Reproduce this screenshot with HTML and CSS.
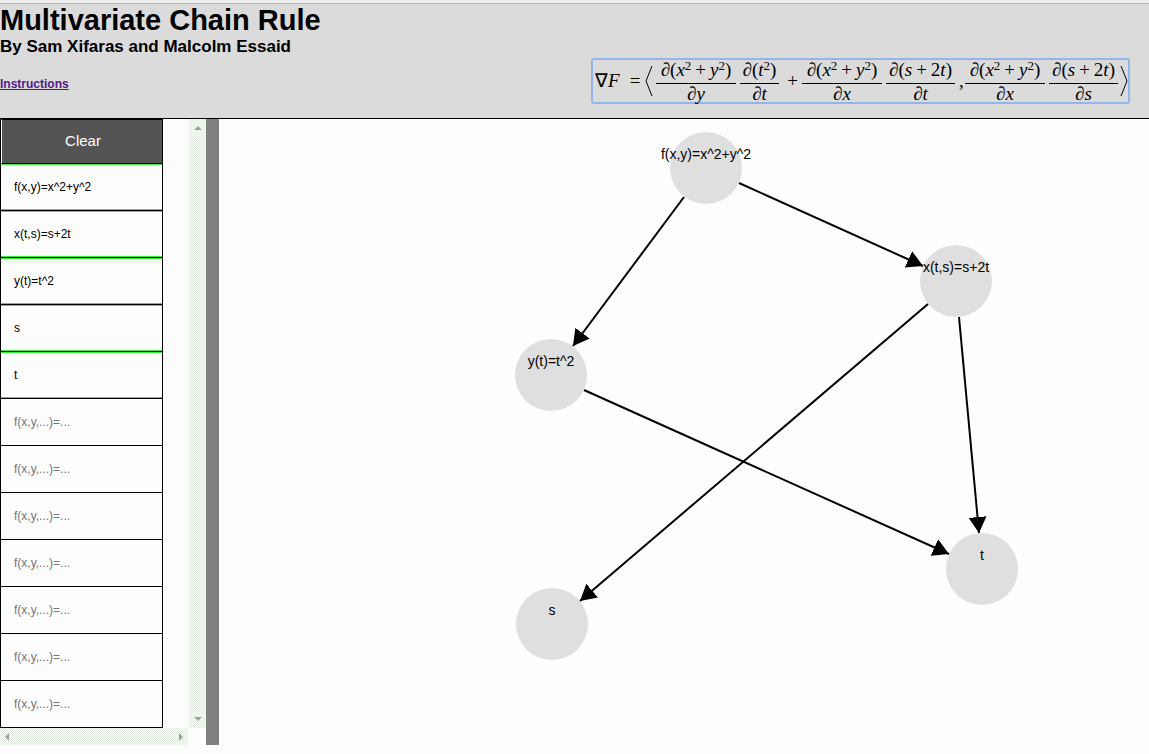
FILE: index.html
```html
<!DOCTYPE html>
<html lang="en">
<head>
<meta charset="utf-8">
<title>Multivariate Chain Rule</title>
<link rel="stylesheet" href="styles.css">
</head>
<body>
<header class="header">
  <div class="titles">
    <h1 class="title">Multivariate Chain Rule</h1>
    <h2 class="authors">By Sam Xifaras and Malcolm Essaid</h2>
    <a class="help" href="#instructions">Instructions</a>
  </div>
  <div class="formula" tabindex="0">
    <span class="gradient">∇<i>F</i></span>
    <span class="equals">=</span>
    <svg class="angle" viewBox="0 0 8 32" aria-hidden="true"><path d="M7 1 1 16l6 15"/></svg>
    <span class="frac wide"><span class="num"><i>∂</i>(<i>x</i><sup>2</sup><b class="op">+</b><i>y</i><sup>2</sup>)</span><span class="den"><i>∂y</i></span></span>
    <span class="frac small"><span class="num"><i>∂</i>(<i>t</i><sup>2</sup>)</span><span class="den"><i>∂t</i></span></span>
    <span class="plus">+</span>
    <span class="frac wide"><span class="num"><i>∂</i>(<i>x</i><sup>2</sup><b class="op">+</b><i>y</i><sup>2</sup>)</span><span class="den"><i>∂x</i></span></span>
    <span class="frac medium"><span class="num"><i>∂</i>(<i>s</i><b class="op">+</b>2<i>t</i>)</span><span class="den"><i>∂t</i></span></span>
    <span class="comma">,</span>
    <span class="frac wide"><span class="num"><i>∂</i>(<i>x</i><sup>2</sup><b class="op">+</b><i>y</i><sup>2</sup>)</span><span class="den"><i>∂x</i></span></span>
    <span class="frac medium"><span class="num"><i>∂</i>(<i>s</i><b class="op">+</b>2<i>t</i>)</span><span class="den"><i>∂s</i></span></span>
    <svg class="angle" viewBox="0 0 8 32" aria-hidden="true"><path d="M1 1l6 15-6 15"/></svg>
  </div>
</header>
<main class="workspace">
  <aside class="sidebar">
    <form class="functions">
      <button class="clear" type="button">Clear</button>
      <input class="fn valid" aria-label="Function 1" placeholder="f(x,y,...)=..." value="f(x,y)=x^2+y^2">
      <input class="fn valid" aria-label="Function 2" placeholder="f(x,y,...)=..." value="x(t,s)=s+2t">
      <input class="fn valid" aria-label="Function 3" placeholder="f(x,y,...)=..." value="y(t)=t^2">
      <input class="fn valid" aria-label="Function 4" placeholder="f(x,y,...)=..." value="s">
      <input class="fn valid" aria-label="Function 5" placeholder="f(x,y,...)=..." value="t">
      <input class="fn" aria-label="Function 6" placeholder="f(x,y,...)=...">
      <input class="fn" aria-label="Function 7" placeholder="f(x,y,...)=...">
      <input class="fn" aria-label="Function 8" placeholder="f(x,y,...)=...">
      <input class="fn" aria-label="Function 9" placeholder="f(x,y,...)=...">
      <input class="fn" aria-label="Function 10" placeholder="f(x,y,...)=...">
      <input class="fn" aria-label="Function 11" placeholder="f(x,y,...)=...">
      <input class="fn" aria-label="Function 12" placeholder="f(x,y,...)=...">
    </form>
    <div class="scroll vertical">
      <svg width="8" height="4" viewBox="0 0 8 4"><path d="M0 4 4 0l4 4z"/></svg>
      <svg width="8" height="4" viewBox="0 0 8 4"><path d="M0 0l4 4 4-4z"/></svg>
    </div>
    <div class="scroll horizontal">
      <svg width="4" height="8" viewBox="0 0 4 8"><path d="M4 0 0 4l4 4z"/></svg>
      <svg width="4" height="8" viewBox="0 0 4 8"><path d="M0 0l4 4-4 4z"/></svg>
    </div>
  </aside>
  <div class="divider"></div>
  <svg class="graph" role="img" aria-label="Dependency graph">
    <defs>
      <marker id="arrow" markerUnits="userSpaceOnUse" markerWidth="17" markerHeight="18" refX="16" refY="9" orient="auto"><path d="M0 0l16 9-16 9z"/></marker>
    </defs>
    <g class="nodes">
      <circle cx="487" cy="49" r="36"/>
      <circle cx="737" cy="162" r="36"/>
      <circle cx="332" cy="256" r="36"/>
      <circle cx="333" cy="505" r="36"/>
      <circle cx="763" cy="450" r="36"/>
    </g>
    <g class="edges">
      <path d="M465 78 354 227"/>
      <path d="M520 64 704 147"/>
      <path d="M365 271 730 435"/>
      <path d="M709 185 361 482"/>
      <path d="M740 198 760 414"/>
    </g>
    <g class="labels">
      <text x="487" y="40">f(x,y)=x^2+y^2</text>
      <text x="737" y="153">x(t,s)=s+2t</text>
      <text x="332" y="247">y(t)=t^2</text>
      <text x="333" y="496">s</text>
      <text x="763" y="441">t</text>
    </g>
  </svg>
</main>
</body>
</html>
```
FILE: styles.css
```css
* { box-sizing: border-box; }

body {
  margin: 0;
  background: #fdfdfd;
  color: #000;
  font-family: "Liberation Sans", Arial, sans-serif;
}

.header {
  display: flex;
  justify-content: space-between;
  align-items: flex-start;
  height: 119px;
  border-top: 3px solid #f0f0f0;
  border-bottom: 1px solid #000;
  background: #dbdbdb;
  box-shadow: inset 0 1px #b4b4b4;
}

.title {
  margin: 0;
  font-size: 29px;
  line-height: 34px;
}

.authors {
  margin: 0 0 20px;
  font-size: 17px;
  line-height: 20px;
}

.help {
  display: block;
  color: #551a8b;
  font-size: 12px;
  font-weight: bold;
  line-height: 14px;
}

.formula {
  display: flex;
  align-items: center;
  height: 46px;
  margin: 55px 19px 0 0;
  padding: 0 0 0 2px;
  border: 2px solid #94b4ec;
  border-radius: 3px;
  font-family: "Liberation Serif", "Times New Roman", serif;
  font-size: 19px;
  line-height: 22px;
}

.gradient {
  flex: none;
  width: 30px;
  white-space: nowrap;
}

.equals {
  flex: none;
  width: 20px;
  text-align: center;
}

.angle {
  flex: none;
  width: 8px;
  height: 32px;
  margin-right: 3px;
  fill: none;
  stroke: #000;
  stroke-width: 1;
}

.angle:last-child { margin-right: 0; }

.frac {
  display: flex;
  flex-direction: column;
  flex: none;
  margin-right: 4px;
  text-align: center;
  white-space: nowrap;
}

.frac:nth-last-child(2) { margin-right: 2px; }

.wide { width: 80px; }
.medium { width: 69px; }
.small { width: 39px; }

.num {
  padding-bottom: 2px;
  border-bottom: 1px solid #000;
}

.den { line-height: 20px; }

.formula sup {
  font-size: 13px;
  line-height: 0;
  vertical-align: 6px;
}

.op {
  margin: 0 4px;
  font-weight: normal;
}

.plus {
  flex: none;
  width: 19px;
  text-align: center;
}

.comma {
  flex: none;
  width: 6px;
}

.workspace {
  display: flex;
  align-items: flex-start;
}

.sidebar {
  display: grid;
  grid-template-columns: 189px 17px;
  flex: none;
}

.functions {
  display: flex;
  flex-direction: column;
  width: 163px;
  border-left: 1px solid #000;
}

.clear {
  height: 45px;
  padding: 0 6px 2px 8px;
  border: 1px solid #000;
  border-left-color: #fff;
  background: #545454;
  color: #fff;
  font-family: inherit;
  font-size: 15px;
}

.fn {
  width: 100%;
  height: 47px;
  padding: 0 13px;
  border: 0;
  border-right: 1px solid #000;
  border-bottom: 1px solid #000;
  border-radius: 0;
  background: #fdfdfd;
  color: #000;
  font-family: inherit;
  font-size: 12px;
}

.fn::placeholder { color: #757575; }

.valid { box-shadow: inset 0 1px #33ee33, inset 0 -1px #33ee33; }

.scroll {
  display: flex;
  justify-content: space-between;
  align-items: center;
  background: repeating-conic-gradient(#fdfdfd 0 25%, #e2ebe0 0 50%) 0 0 / 2px 2px;
  fill: #a0a0a0;
}

.vertical {
  flex-direction: column;
  padding: 7px 0;
}

.horizontal {
  height: 17px;
  margin-right: 1px;
  padding: 0 5px;
}

.divider {
  flex: none;
  align-self: stretch;
  width: 13px;
  background: #808080;
}

.graph {
  flex: 1;
  min-width: 0;
  height: 626px;
}

.nodes { fill: #dfdfdf; }

.edges {
  fill: none;
  stroke: #000;
  stroke-width: 2;
}

.edges path { marker-end: url(#arrow); }

.labels {
  font-size: 14px;
  text-anchor: middle;
}
```
